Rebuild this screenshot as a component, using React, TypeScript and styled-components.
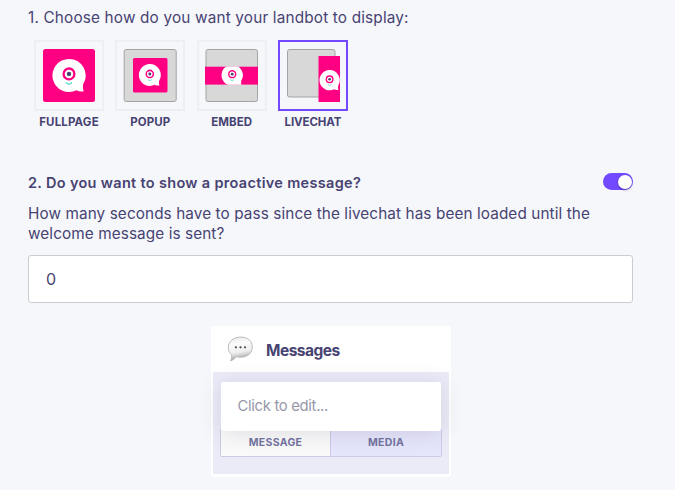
import React, { useState } from 'react';
import styled, { createGlobalStyle } from 'styled-components';

const ink = '#474372';
const violet = '#7349ff';
const pink = '#ff0083';

const GlobalStyle = createGlobalStyle`
  *, *::before, *::after { box-sizing: border-box; }
  body {
    margin: 0;
    background: #f6f7fb;
    color: ${ink};
    font-family: Inter, 'Liberation Sans', sans-serif;
  }
`;

const Page = styled.main`
  height: 490px;
  padding: 7px 42px 0 28px;
  overflow: hidden;
  display: flex;
  flex-direction: column;
  background: #f6f7fb;
`;

const Question = styled.h2`
  margin: 0;
  font-size: 15.3px;
  line-height: 21px;
  font-weight: 400;
  letter-spacing: 0.18px;
  white-space: nowrap;
`;

const Options = styled.div`
  display: grid;
  grid-template-columns: repeat(4, 70px);
  column-gap: 11.33px;
  margin: 12px 0 0 6px;
`;

const Option = styled.button`
  display: flex;
  flex-direction: column;
  align-items: center;
  padding: 0;
  border: 0;
  background: none;
  color: inherit;
  font: inherit;
`;

const Tile = styled.span<{ $active: boolean }>`
  display: block;
  width: 70px;
  height: 71px;
  border: 2px solid ${(p) => (p.$active ? violet : '#eeeff3')};

  svg { display: block; }
`;

const OptionLabel = styled.span<{ $spacing: number }>`
  margin-top: 4px;
  font-size: 11.5px;
  line-height: 14px;
  font-weight: 700;
  letter-spacing: ${(p) => p.$spacing}px;
  white-space: nowrap;
`;

const ToggleRow = styled.div`
  display: flex;
  justify-content: space-between;
  align-items: flex-start;
  margin-top: 44px;
`;

const StrongQuestion = styled.h2`
  margin: 0;
  font-size: 14.5px;
  line-height: 20px;
  font-weight: 600;
  letter-spacing: 0.32px;
  white-space: nowrap;
`;

const Switch = styled.button`
  display: flex;
  justify-content: flex-end;
  align-items: center;
  width: 30px;
  height: 17px;
  padding: 0 1px;
  border: 0;
  border-radius: 9px;
  background: ${violet};
`;

const Knob = styled.span`
  width: 14px;
  height: 14px;
  border-radius: 50%;
  background: #fff;
  box-shadow: 0 1px 2px rgba(40, 20, 110, 0.5);
`;

const Description = styled.p`
  margin: 11px 0 0;
  font-size: 15.3px;
  line-height: 20px;
  letter-spacing: 0.1px;
  white-space: nowrap;
`;

const SecondsField = styled.input`
  width: 605px;
  height: 48px;
  margin-top: 11px;
  padding: 0 17px;
  border: 1px solid #cccdd1;
  border-radius: 3px;
  background: #fff;
  color: ${ink};
  font: 400 16px/20px Inter, 'Liberation Sans', sans-serif;
  outline: none;
`;

const Card = styled.section`
  width: 240px;
  height: 151px;
  margin: 23px 0 0 183px;
  padding: 0 2px 3px;
  display: flex;
  flex-direction: column;
  border-radius: 3px;
  background: #fff;
`;

const CardHeader = styled.header`
  display: flex;
  align-items: center;
  height: 46px;
  flex: none;
  padding-left: 14px;

  svg { flex: none; }
`;

const CardTitle = styled.h3`
  margin: 3px 0 0 12px;
  font-size: 15.5px;
  line-height: 20px;
  font-weight: 700;
  letter-spacing: -0.5px;
`;

const CardBody = styled.div`
  flex: 1;
  padding: 10px 8px 0;
  background: #ebebf8;
`;

const Editor = styled.div`
  position: relative;
  height: 49px;
  padding: 14px 16.5px;
  border-radius: 2px;
  background: #fff;
  box-shadow: 0 2px 22px rgba(60, 55, 90, 0.15);
  color: #9797a9;
  font-size: 14.8px;
  line-height: 20px;
  letter-spacing: -0.3px;
  white-space: nowrap;
`;

const Tabs = styled.div`
  display: grid;
  grid-template-columns: 1fr 1fr;
  height: 28px;
  margin: -2px -1px 0;
  border: 1px solid #cbcbe5;
  border-radius: 0 0 2px 2px;
`;

const Tab = styled.button<{ $selected?: boolean }>`
  padding: 0;
  border: 0;
  border-right: ${(p) => (p.$selected ? '1px solid #cbcbe5' : '0')};
  background: ${(p) => (p.$selected ? '#fafafa' : '#e5e5fb')};
  color: #72729f;
  font: 700 10.5px/14px Inter, 'Liberation Sans', sans-serif;
  letter-spacing: 0.3px;
`;

// The one-eyed chat bubble, drawn around its own centre.
const Mascot = ({ x, y, scale = 1 }: { x: number; y: number; scale?: number }) => (
  <g transform={`translate(${x} ${y}) scale(${scale})`}>
    <path
      d="M0 -16.6A16.6 16.6 0 1 0 7.5 14.8C9.7 16 12 16.4 14.8 15.8C13.8 13.8 13.7 11.4 14.2 8.6A16.6 16.6 0 0 0 0 -16.6Z"
      fill="#fff"
    />
    <circle cy="-1.6" r="5.4" fill="#fff" stroke={pink} strokeWidth="2.3" />
    <circle cy="-1.6" r="2.2" fill={ink} />
    <path d="M-3 6.8Q0 10.6 3 6.8" fill="none" stroke="#3fd9c4" strokeWidth="1.2" />
  </g>
);

const Frame = ({ x, y, w, h }: { x: number; y: number; w: number; h: number }) => (
  <rect x={x} y={y} width={w} height={h} rx="2" fill="#d8d8d8" stroke="#a3a3a3" />
);

const artwork: Record<string, React.ReactNode> = {
  FULLPAGE: (
    <>
      <rect x="7" y="7" width="52" height="53" rx="2.5" fill={pink} />
      <Mascot x={33} y={33.5} />
    </>
  ),
  POPUP: (
    <>
      <Frame x={7.2} y={7.5} w={52} h={52} />
      <rect x="16" y="16" width="34.5" height="34.5" rx="1.5" fill={pink} />
      <Mascot x={32.8} y={33} scale={0.66} />
    </>
  ),
  EMBED: (
    <>
      <Frame x={7} y={7.5} w={51.5} h={52} />
      <svg x="6" y="24.4" width="53" height="18.4" viewBox="6 24.4 53 18.4">
        <rect x="6" y="24.4" width="53" height="18.4" fill={pink} />
        <Mascot x={33.2} y={33.2} scale={0.64} />
      </svg>
    </>
  ),
  LIVECHAT: (
    <>
      <Frame x={7.5} y={7.5} w={47.5} h={47.5} />
      <rect x="38.5" y="14" width="21.5" height="46" fill={pink} />
      <Mascot x={49.6} y={38.2} scale={0.61} />
    </>
  ),
};

const SpeechIcon = () => (
  <svg width="27" height="27" viewBox="0 0 27 27">
    <defs>
      <linearGradient id="bubble" x1="0" y1="0" x2="0.2" y2="1">
        <stop offset="0" stopColor="#e8e8e8" />
        <stop offset="0.35" stopColor="#fbfbfb" />
        <stop offset="0.7" stopColor="#efefef" />
        <stop offset="1" stopColor="#a6a6a6" />
      </linearGradient>
    </defs>
    <path
      d="M13.8 1.1C21 1.1 25.3 5.2 25.3 11C25.3 17.3 20.4 21.2 13.8 21.2C11.9 21.2 10.5 21.1 9.2 20.7C7.8 22.7 5.5 24.4 3.4 24.7C4.6 22.8 5 21 4.6 18.6C2.3 17 1.3 14.4 1.3 11.2C1.3 5.3 6.6 1.1 13.8 1.1Z"
      fill="url(#bubble)"
      stroke="#b5b5b5"
      strokeWidth="0.9"
    />
    <circle cx="8.9" cy="11.3" r="1.1" fill="#4a4a4a" />
    <circle cx="13.5" cy="11.3" r="1.1" fill="#4a4a4a" />
    <circle cx="18" cy="11.3" r="1.1" fill="#4a4a4a" />
  </svg>
);

const options = [
  { name: 'FULLPAGE', spacing: 0.15 },
  { name: 'POPUP', spacing: 0.1 },
  { name: 'EMBED', spacing: 0.05 },
  { name: 'LIVECHAT', spacing: -0.1 },
];

export default function App() {
  const [display, setDisplay] = useState('LIVECHAT');
  return (
    <Page>
      <GlobalStyle />
      <Question>1. Choose how do you want your landbot to display:</Question>
      <Options>
        {options.map(({ name, spacing }) => (
          <Option key={name} onClick={() => setDisplay(name)}>
            <Tile $active={display === name}>
              <svg width="66" height="67" viewBox="0 0 66 67">{artwork[name]}</svg>
            </Tile>
            <OptionLabel $spacing={spacing}>{name}</OptionLabel>
          </Option>
        ))}
      </Options>
      <ToggleRow>
        <StrongQuestion>2. Do you want to show a proactive message?</StrongQuestion>
        <Switch role="switch" aria-checked="true">
          <Knob />
        </Switch>
      </ToggleRow>
      <Description>
        How many seconds have to pass since the livechat has been loaded until the
        <br />
        welcome message is sent?
      </Description>
      <SecondsField defaultValue="0" />
      <Card>
        <CardHeader>
          <SpeechIcon />
          <CardTitle>Messages</CardTitle>
        </CardHeader>
        <CardBody>
          <Editor>Click to edit...</Editor>
          <Tabs>
            <Tab $selected>MESSAGE</Tab>
            <Tab>MEDIA</Tab>
          </Tabs>
        </CardBody>
      </Card>
    </Page>
  );
}
